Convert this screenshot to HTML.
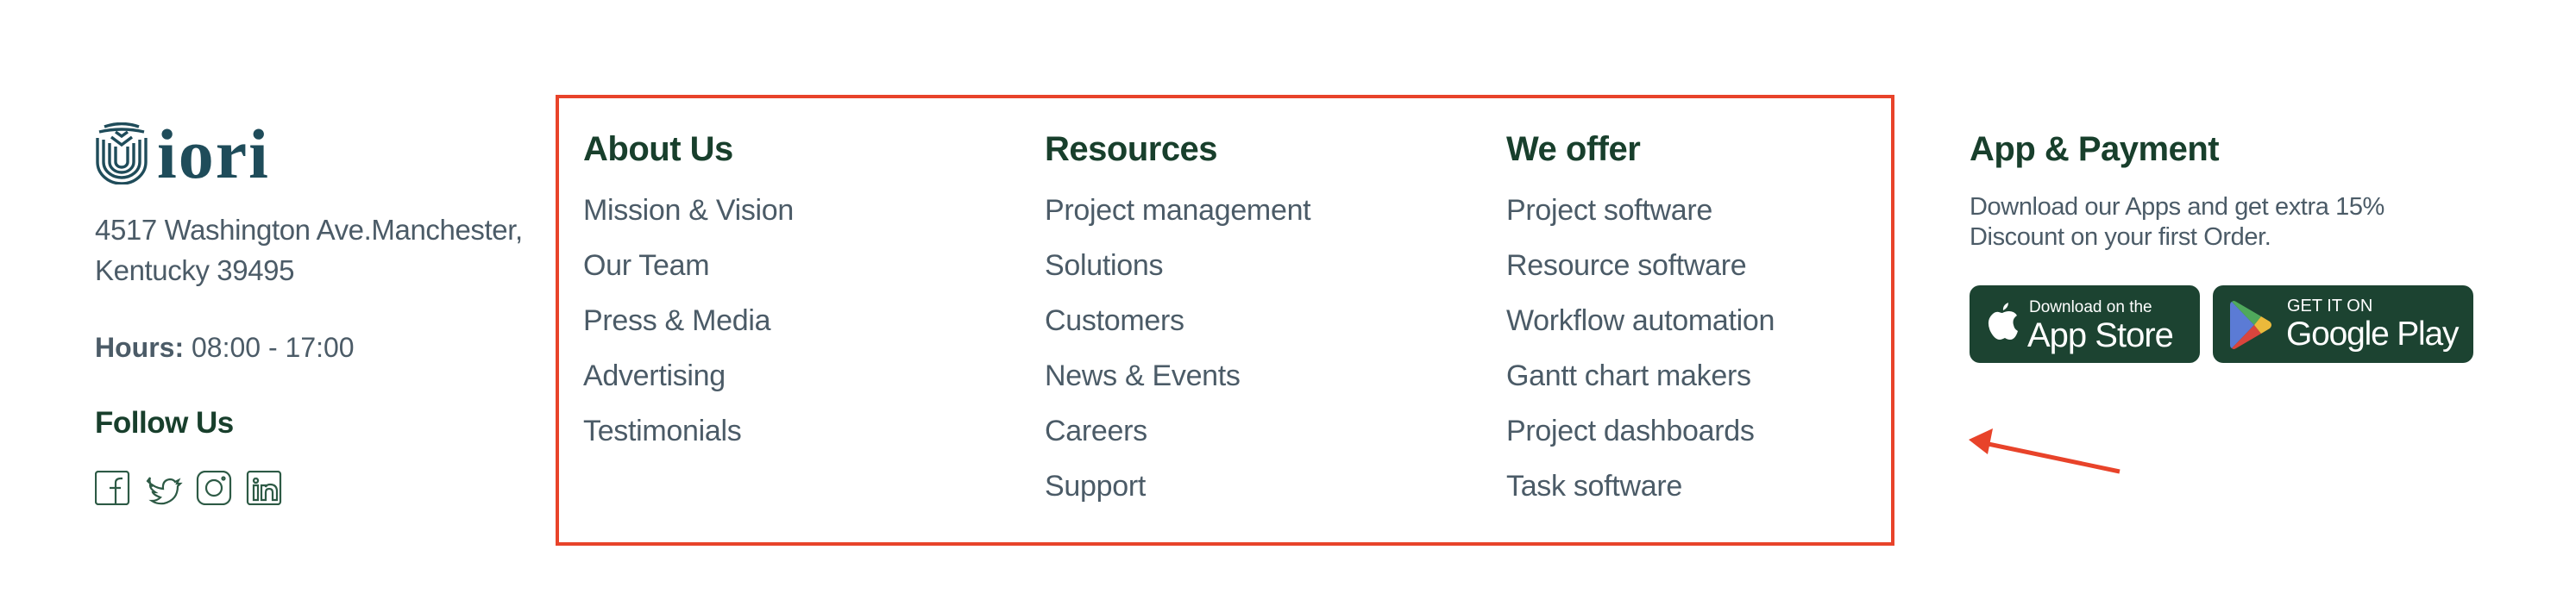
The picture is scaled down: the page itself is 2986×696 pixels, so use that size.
<!DOCTYPE html>
<html><head><meta charset="utf-8"><style>
*{margin:0;padding:0;box-sizing:border-box}
body{width:2986px;height:696px;background:#fff;position:relative;overflow:hidden;font-family:"Liberation Sans",sans-serif;color:#4b5b67}
.a{position:absolute;white-space:nowrap}
.h{font-weight:bold;color:#183f2c;font-size:40px;letter-spacing:-0.5px}
.it{font-size:34px;letter-spacing:-0.3px}
.btn{position:absolute;background:#1c4331;border-radius:12px;color:#fff}
</style></head><body>
<!-- logo -->
<svg class="a" style="left:110px;top:142px" width="62" height="72" viewBox="0 0 62 72" fill="none" stroke="#1f4c5a" stroke-width="3.4">
<path d="M3 18 v28 a28 25 0 0 0 56 0 v-28"/>
<path d="M10 20 v26 a21 18 0 0 0 42 0 v-26"/>
<path d="M17 24 v22 a14 12 0 0 0 28 0 v-22"/>
<path d="M24 28 v18 a7 6 0 0 0 14 0 v-18"/>
<path d="M5 11 q26 -6 52 0"/><path d="M11 5 q20 -7 40 0"/>
<path d="M19 17 l12 9 l12 -9"/><path d="M24 11 l7 5 l7 -5"/>
</svg>
<div class="a" style="left:182px;top:132px;font-family:'Liberation Serif',serif;font-weight:bold;font-size:82px;color:#1f4c5a;letter-spacing:2px">iori</div>
<div class="a" style="left:110px;top:243px;font-size:33px;line-height:47px;letter-spacing:-0.4px">4517 Washington Ave.Manchester,<br>Kentucky 39495</div>
<div class="a" style="left:110px;top:385px;font-size:32px"><b>Hours:</b> 08:00 - 17:00</div>
<div class="a h" style="left:110px;top:471px;font-size:35px">Follow Us</div>
<svg class="a" style="left:110px;top:546px" width="220" height="40" viewBox="0 0 220 40" fill="none" stroke="#2d5a45" stroke-width="2.2">
<rect x="1" y="1" width="38" height="38" rx="3"/><path d="M24 39 V20 h6 M17 20 h7 M24 20 v-6 q0-5 6-5 h2"/>
<path d="M61 12 q8 8 18 9 q-1 -10 8 -11 q4 0 6 3 l4 -2 l-2 4 l4 0 l-3 3 q0 16 -16 20 q-8 1 -14 -3 q6 0 10 -4 q-8 -3 -9 -6 h3 q-6 -4 -6 -8 l3 1 q-5 -4 -3 -10z"/>
<rect x="119" y="1" width="38" height="38" rx="9"/><circle cx="138" cy="20" r="9"/><circle cx="149" cy="9" r="1.5"/>
<rect x="177" y="1" width="38" height="38" rx="3"/><path d="M184 17 v17 h5 v-17z M186.5 9 a2.5 2.5 0 1 0 0.1 0 M193 17 v17 h5 v-9 q0-4 4-4 q4 0 4 4 v9 h5 v-10 q0-8 -8-8 q-4 0 -5 3 v-2z"/>
</svg>
<!-- box -->
<div class="a" style="left:644px;top:110px;width:1552px;height:523px;border:4px solid #e8432a"></div>
<div class="a h" style="left:676px;top:151px">About Us</div>
<div class="a h" style="left:1211px;top:151px">Resources</div>
<div class="a h" style="left:1746px;top:151px">We offer</div>
<div class="a it" style="left:676px;top:212px;line-height:64px">Mission &amp; Vision<br>Our Team<br>Press &amp; Media<br>Advertising<br>Testimonials</div>
<div class="a it" style="left:1211px;top:212px;line-height:64px">Project management<br>Solutions<br>Customers<br>News &amp; Events<br>Careers<br>Support</div>
<div class="a it" style="left:1746px;top:212px;line-height:64px">Project software<br>Resource software<br>Workflow automation<br>Gantt chart makers<br>Project dashboards<br>Task software</div>
<!-- app -->
<div class="a h" style="left:2283px;top:151px">App &amp; Payment</div>
<div class="a" style="left:2283px;top:223px;font-size:29px;line-height:35px;letter-spacing:-0.4px">Download our Apps and get extra 15%<br>Discount on your first Order.</div>
<div class="btn" style="left:2283px;top:331px;width:267px;height:90px">
<svg class="a" style="left:20px;top:18px" width="36" height="46" viewBox="0 0 36 46"><path fill="#fff" d="M25 2 q0 6 -6 9 q-1 -6 6 -9z M18 14 q4 -2 8 -2 q6 0 9 5 q-6 4 -4 11 q1 5 5 7 q-3 10 -9 10 q-3 0 -6 -2 q-4 2 -6 2 q-6 0 -11 -10 q-5 -12 2 -19 q4 -4 8 -3 q3 1 4 1z"/></svg>
<div class="a" style="left:69px;top:15px;font-size:19px">Download on the</div>
<div class="a" style="left:67px;top:36px;font-size:40px;letter-spacing:-1px">App Store</div>
</div>
<div class="btn" style="left:2565px;top:331px;width:302px;height:90px">
<svg class="a" style="left:20px;top:16px" width="52" height="60" viewBox="0 0 52 60">
<path fill="#5b7bd5" d="M2 3 L28 30 L2 57 q-2-1-2-4 V7 q0-3 2-4z"/>
<path fill="#4fa95c" d="M2 3 q2-2 5 0 L36 20 L28 30z"/>
<path fill="#d9453d" d="M2 57 q2 2 5 0 L36 40 L28 30z"/>
<path fill="#ebb93b" d="M36 20 L46 26 q4 4 0 8 L36 40 L28 30z"/>
</svg>
<div class="a" style="left:86px;top:13px;font-size:20px">GET IT ON</div>
<div class="a" style="left:85px;top:35px;font-size:39px;letter-spacing:-1.2px">Google Play</div>
</div>
<!-- arrow -->
<svg class="a" style="left:0;top:0" width="2986" height="696"><line x1="2457" y1="547" x2="2300" y2="514" stroke="#e8432a" stroke-width="5"/><path d="M2282 510 L2310 497 L2304 527z" fill="#e8432a"/></svg>
</body></html>
